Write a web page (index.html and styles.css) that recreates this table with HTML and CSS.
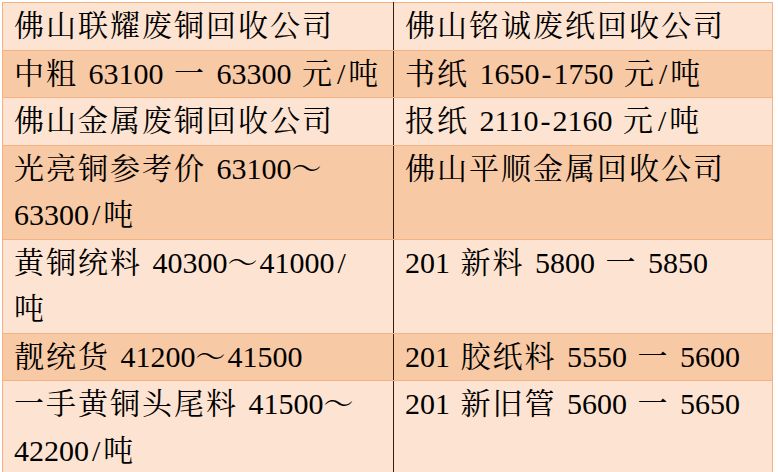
FILE: index.html
```html
<!DOCTYPE html>
<html lang="zh-CN">
<head>
<meta charset="utf-8">
<title>废铜废纸回收价格</title>
<link rel="stylesheet" href="styles.css">
</head>
<body>
<table class="prices">
  <colgroup><col class="col-left"><col class="col-right"></colgroup>
  <tr class="light">
    <td><span class="c">佛山联耀废铜回收公司</span></td>
    <td><span class="c">佛山铭诚废纸回收公司</span></td>
  </tr>
  <tr class="dark">
    <td><span class="c">中粗</span> 63100 <span class="c">一</span> 63300 <span class="c">元</span><span class="sl">/</span><span class="c">吨</span></td>
    <td><span class="c">书纸</span> 1650<span class="hy">-</span>1750 <span class="c">元</span><span class="sl">/</span><span class="c">吨</span></td>
  </tr>
  <tr class="light">
    <td><span class="c">佛山金属废铜回收公司</span></td>
    <td><span class="c">报纸</span> 2110<span class="hy">-</span>2160 <span class="c">元</span><span class="sl">/</span><span class="c">吨</span></td>
  </tr>
  <tr class="dark">
    <td><span class="c">光亮铜参考价</span> 63100<span class="c">～</span><br>63300<span class="sl">/</span><span class="c">吨</span></td>
    <td><span class="c">佛山平顺金属回收公司</span></td>
  </tr>
  <tr class="light">
    <td><span class="c">黄铜统料</span> 40300<span class="c">～</span>41000<span class="sl">/</span><br><span class="c">吨</span></td>
    <td>201 <span class="c">新料</span> 5800 <span class="c">一</span> 5850</td>
  </tr>
  <tr class="dark">
    <td><span class="c">靓统货</span> 41200<span class="c">～</span>41500</td>
    <td>201 <span class="c">胶纸料</span> 5550 <span class="c">一</span> 5600</td>
  </tr>
  <tr class="light">
    <td><span class="c">一手黄铜头尾料</span> 41500<span class="c">～</span><br>42200<span class="sl">/</span><span class="c">吨</span></td>
    <td>201 <span class="c">新旧管</span> 5600 <span class="c">一</span> 5650</td>
  </tr>
</table>
</body>
</html>
```
FILE: styles.css
```css
html, body {
  margin: 0;
  padding: 0;
  background: #ffffff;
}

body {
  padding: 2px 0 0 2px;
  overflow: hidden;
}

.prices {
  border-collapse: collapse;
  width: 771px;
  table-layout: fixed;
  font-family: "Liberation Serif", "Noto Serif CJK SC", "Noto Sans CJK SC", serif;
  font-size: 30px;
  line-height: 46.5px;
  color: #000000;
  word-spacing: 3px;
  border: 1px solid #f4b183;
}

.col-left { width: 391px; }

.prices td {
  padding: 0 0 0 11px;
  vertical-align: top;
  border-top: 1px solid #f4b183;
  border-bottom: 1px solid #f4b183;
  white-space: nowrap;
}

.prices td:first-child {
  border-right: 1px solid #3b1a0f;
}

.light td { background: #fde4d2; }
.dark td { background: #f8c9a5; }

.c {
  letter-spacing: 2px;
  word-spacing: 0;
}

.sl {
  display: inline-block;
  padding: 0 3px;
}

.hy {
  display: inline-block;
  padding: 0 2px;
}
```
